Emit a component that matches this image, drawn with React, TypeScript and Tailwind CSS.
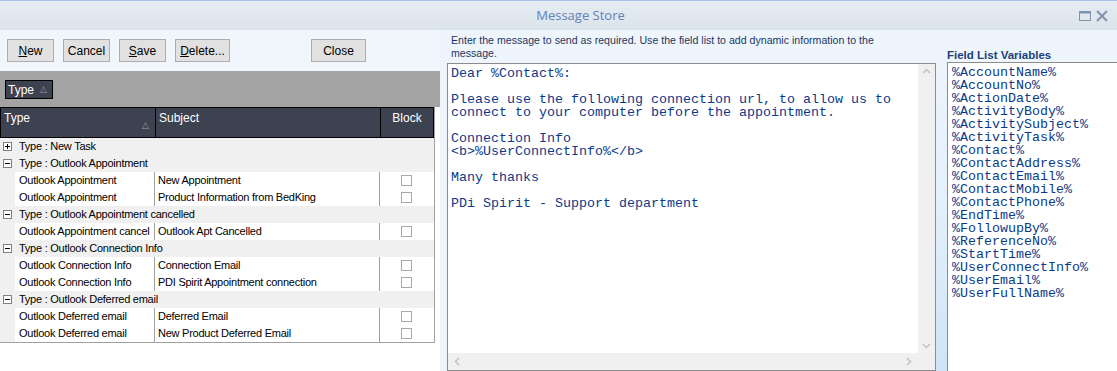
import React from 'react'

type Row =
  | { kind: 'group'; label: string; open: boolean }
  | { kind: 'item'; type: string; subject: string }

const rows: Row[] = [
  { kind: 'group', label: 'Type : New Task', open: false },
  { kind: 'group', label: 'Type : Outlook Appointment', open: true },
  { kind: 'item', type: 'Outlook Appointment', subject: 'New Appointment' },
  { kind: 'item', type: 'Outlook Appointment', subject: 'Product Information from BedKing' },
  { kind: 'group', label: 'Type : Outlook Appointment cancelled', open: true },
  { kind: 'item', type: 'Outlook Appointment cancel', subject: 'Outlook Apt Cancelled' },
  { kind: 'group', label: 'Type : Outlook Connection Info', open: true },
  { kind: 'item', type: 'Outlook Connection Info', subject: 'Connection Email' },
  { kind: 'item', type: 'Outlook Connection Info', subject: 'PDI Spirit Appointment connection' },
  { kind: 'group', label: 'Type : Outlook Deferred email', open: true },
  { kind: 'item', type: 'Outlook Deferred email', subject: 'Deferred Email' },
  { kind: 'item', type: 'Outlook Deferred email', subject: 'New Product Deferred Email' },
]

const fields = [
  '%AccountName%',
  '%AccountNo%',
  '%ActionDate%',
  '%ActivityBody%',
  '%ActivitySubject%',
  '%ActivityTask%',
  '%Contact%',
  '%ContactAddress%',
  '%ContactEmail%',
  '%ContactMobile%',
  '%ContactPhone%',
  '%EndTime%',
  '%FollowupBy%',
  '%ReferenceNo%',
  '%StartTime%',
  '%UserConnectInfo%',
  '%UserEmail%',
  '%UserFullName%',
]

const message = `Dear %Contact%:

Please use the following connection url, to allow us to
connect to your computer before the appointment.

Connection Info
<b>%UserConnectInfo%</b>

Many thanks

PDi Spirit - Support department`

function Btn({ children, className }: { children: React.ReactNode; className: string }) {
  return (
    <button
      type="button"
      className={`h-[23px] bg-[#e1e1e1] border border-[#adadad] text-[12px] text-black leading-none ${className}`}
    >
      {children}
    </button>
  )
}

function ExpandBox({ open }: { open: boolean }) {
  return (
    <span className="w-[9px] h-[9px] border border-[#808080] bg-white flex items-center justify-center">
      <svg width="7" height="7" viewBox="0 0 7 7">
        <path d="M1 3.5h5" stroke="#000" strokeWidth="1" />
        {!open && <path d="M3.5 1v5" stroke="#000" strokeWidth="1" />}
      </svg>
    </span>
  )
}

export default function App() {
  return (
    <div className="w-[1117px] h-[371px] overflow-hidden bg-[#eef5fc] flex flex-col font-['Liberation_Sans',Arial,sans-serif]">
      {/* title bar */}
      <div className="h-[30px] shrink-0 border-t border-[#a7c3e8] bg-gradient-to-b from-[#e6ecf2] to-[#dbe3ec] flex items-center">
        <div className="flex-1" />
        <div className="pl-[52px] text-[13px] text-[#5f82b8] font-['Open_Sans',sans-serif]">Message Store</div>
        <div className="flex-1 flex justify-end items-center gap-[4px] pr-[8px]">
          <svg width="12" height="12" viewBox="0 0 12 12">
            <rect x="0.5" y="1.5" width="11" height="9" fill="none" stroke="#8094b0" strokeWidth="1" />
            <rect x="0.5" y="1.5" width="11" height="2" fill="#8094b0" />
          </svg>
          <svg width="14" height="14" viewBox="0 0 14 14">
            <path d="M2 2L12 12M12 2L2 12" stroke="#8094b0" strokeWidth="2" />
          </svg>
        </div>
      </div>

      <div className="flex flex-1 min-h-0">
        {/* left panel */}
        <div className="w-[440px] shrink-0 flex flex-col bg-white">
          <div className="h-[41px] shrink-0 bg-[#f0f6fc] flex items-start pt-[9px] pl-[7px]">
            <Btn className="w-[47px]">
              <u>N</u>ew
            </Btn>
            <Btn className="w-[47px] ml-[9px]">Cancel</Btn>
            <Btn className="w-[47px] ml-[9px]">
              <u>S</u>ave
            </Btn>
            <Btn className="w-[55px] ml-[9px]">
              <u>D</u>elete...
            </Btn>
            <Btn className="w-[55px] ml-[81px]">Close</Btn>
          </div>

          <div className="h-[36px] shrink-0 bg-[#a3a3a3] pt-[9px] pl-[5px]">
            <div className="w-[48px] h-[19px] bg-[#3c4250] border border-black text-white text-[12px] flex items-center pl-[2px] gap-[6px]">
              Type <span className="text-[9px] text-[#9aa0aa]">△</span>
            </div>
          </div>

          <div className="w-[435px] border-r border-b border-[#a0a0a0] text-[11px] tracking-[-0.25px] text-black">
            <div className="h-[31px] bg-[#3c4250] border border-black flex text-white text-[12px] tracking-normal">
              <div className="w-[155px] border-r border-black pl-[3px] pt-[1px] relative">
                Type
                <span className="absolute right-[6px] top-[11px] text-[9px] text-[#9aa0aa]">△</span>
              </div>
              <div className="w-[225px] border-r border-black pl-[3px] pt-[1px]">Subject</div>
              <div className="flex-1 text-center pt-[1px]">Block</div>
            </div>
            {rows.map((r, i) =>
              r.kind === 'group' ? (
                <div key={i} className="h-[17px] bg-[#f0f0f0] flex items-center pl-[3px] gap-[7px]">
                  <ExpandBox open={r.open} />
                  <span>{r.label}</span>
                </div>
              ) : (
                <div key={i} className="h-[17px] bg-[#f0f0f0] flex">
                  <div className="w-[15px]" />
                  <div className="flex-1 bg-white flex">
                    <div className="w-[140px] border-r border-[#a0a0a0] pl-[4px] flex items-center whitespace-nowrap overflow-hidden">
                      {r.type}
                    </div>
                    <div className="w-[225px] border-r border-[#a0a0a0] pl-[3px] flex items-center whitespace-nowrap">
                      {r.subject}
                    </div>
                    <div className="flex-1 flex items-center justify-center pr-[2px]">
                      <span className="w-[11px] h-[11px] border border-[#a8a8a8] bg-white" />
                    </div>
                  </div>
                </div>
              )
            )}
          </div>
        </div>

        {/* message panel */}
        <div className="w-[496px] shrink-0 flex flex-col pl-[7px]">
          <div className="h-[33px] shrink-0 pl-[4px] pt-[4px] text-[10.6px] leading-[13px] text-[#1c3563]">
            Enter the message to send as required. Use the field list to add dynamic information to the
            <br />
            message.
          </div>
          <div className="flex-1 min-h-0 border border-[#8c8c8c] bg-white grid grid-cols-[1fr_17px] grid-rows-[1fr_17px]">
            <pre className="pl-[3px] pt-[3px] font-['Liberation_Mono','Courier_New',monospace] text-[13.33px] leading-[13px] text-[#0b3a8a] overflow-hidden">
              {message}
            </pre>
            <div className="bg-[#f0f0f0] flex flex-col items-center justify-between py-[4px]">
              <svg width="9" height="6" viewBox="0 0 9 6">
                <path d="M1 5L4.5 1.5L8 5" fill="none" stroke="#c2c2c2" strokeWidth="1.5" />
              </svg>
              <svg width="9" height="6" viewBox="0 0 9 6">
                <path d="M1 1L4.5 4.5L8 1" fill="none" stroke="#c2c2c2" strokeWidth="1.5" />
              </svg>
            </div>
            <div className="bg-[#f0f0f0] flex items-center justify-between px-[6px]">
              <svg width="6" height="9" viewBox="0 0 6 9">
                <path d="M5 1L1.5 4.5L5 8" fill="none" stroke="#c2c2c2" strokeWidth="1.5" />
              </svg>
              <svg width="6" height="9" viewBox="0 0 6 9">
                <path d="M1 1L4.5 4.5L1 8" fill="none" stroke="#c2c2c2" strokeWidth="1.5" />
              </svg>
            </div>
            <div className="bg-[#f0f0f0]" />
          </div>
        </div>

        {/* splitter */}
        <div className="w-[11px] shrink-0 bg-gradient-to-b from-[#eef5fc] via-[#e4f0fb] to-[#cfe4f6]" />

        {/* field list */}
        <div className="flex-1 flex flex-col">
          <div className="h-[32px] shrink-0 flex items-end text-[11.5px] font-bold text-[#1e3e7a]">
            <span className="translate-y-[2px]">Field List Variables</span>
          </div>
          <div className="flex-1 border-l border-t border-[#8c8c8c] bg-white pl-[4px] pt-[3px] font-['Liberation_Mono','Courier_New',monospace] text-[13.33px] leading-[13px] text-[#0b3a8a]">
            {fields.map((f) => (
              <div key={f}>{f}</div>
            ))}
          </div>
        </div>
      </div>
    </div>
  )
}
